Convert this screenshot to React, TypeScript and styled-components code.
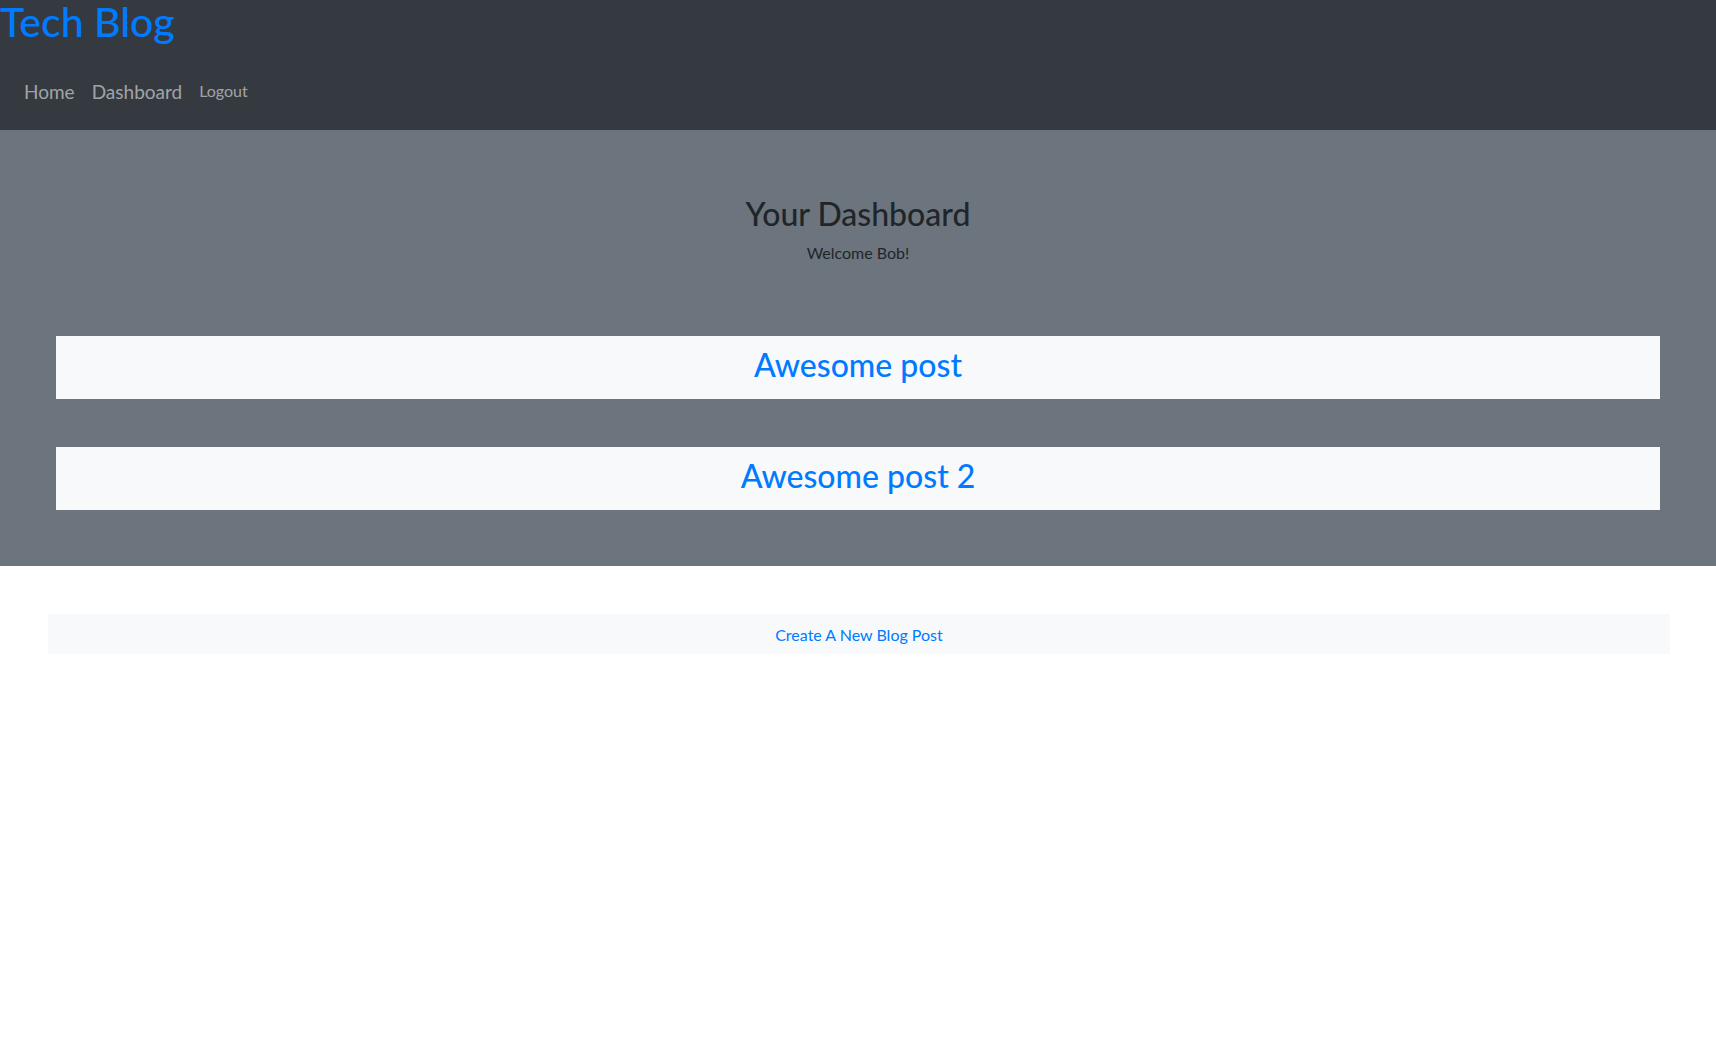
import React from "react";
import styled, { createGlobalStyle } from "styled-components";

const GlobalStyle = createGlobalStyle`
  html, body { margin: 0; padding: 0; background: #ffffff; }
  body { font-family: Lato, "Open Sans", "Noto Sans", sans-serif; color: #212529; }
  * { box-sizing: border-box; }
`;

const Header = styled.header`
  background: #343a40;
  height: 130px;
  display: flex;
  flex-direction: column;
`;

const Brand = styled.h1`
  margin: 0;
  font-size: 41px;
  font-weight: 500;
  line-height: 44px;
  color: #007bff;
`;

const Nav = styled.nav`
  display: flex;
  align-items: baseline;
  gap: 17px;
  padding: 36px 0 0 24px;
`;

const NavLink = styled.a<{ $small?: boolean }>`
  color: rgba(255, 255, 255, 0.55);
  font-size: ${(p) => (p.$small ? "16px" : "19px")};
  text-decoration: none;
  position: relative;
  top: ${(p) => (p.$small ? "-2px" : "0")};
`;

const Hero = styled.section`
  background: #6c757d;
  padding: 65px 56px 56px;
  display: flex;
  flex-direction: column;
  align-items: stretch;
`;

const Title = styled.h2`
  margin: 0;
  text-align: center;
  font-size: 32px;
  font-weight: 500;
  line-height: 1.2;
  color: #212529;
`;

const Welcome = styled.p`
  margin: 10px 0 0;
  text-align: center;
  font-size: 16px;
  color: #212529;
`;

const PostList = styled.div`
  display: flex;
  flex-direction: column;
  gap: 48px;
  margin-top: 74px;
`;

const PostCard = styled.div`
  background: #f8f9fa;
  height: 63px;
  display: flex;
  justify-content: center;
  padding-top: 10px;
`;

const PostTitle = styled.a`
  font-size: 32px;
  font-weight: 500;
  line-height: 1.2;
  color: #007bff;
  text-decoration: none;
`;

const Footer = styled.div`
  padding: 48px 46px 0 48px;
`;

const CreateButton = styled.a`
  display: flex;
  align-items: center;
  justify-content: center;
  height: 40px;
  background: #f8f9fa;
  color: #007bff;
  font-size: 16px;
  text-decoration: none;
`;

export default function App() {
  return (
    <>
      <GlobalStyle />
      <Header>
        <Brand>Tech Blog</Brand>
        <Nav>
          <NavLink href="#">Home</NavLink>
          <NavLink href="#">Dashboard</NavLink>
          <NavLink href="#" $small>
            Logout
          </NavLink>
        </Nav>
      </Header>
      <Hero>
        <Title>Your Dashboard</Title>
        <Welcome>Welcome Bob!</Welcome>
        <PostList>
          <PostCard>
            <PostTitle href="#">Awesome post</PostTitle>
          </PostCard>
          <PostCard>
            <PostTitle href="#">Awesome post 2</PostTitle>
          </PostCard>
        </PostList>
      </Hero>
      <Footer>
        <CreateButton href="#">Create A New Blog Post</CreateButton>
      </Footer>
    </>
  );
}
